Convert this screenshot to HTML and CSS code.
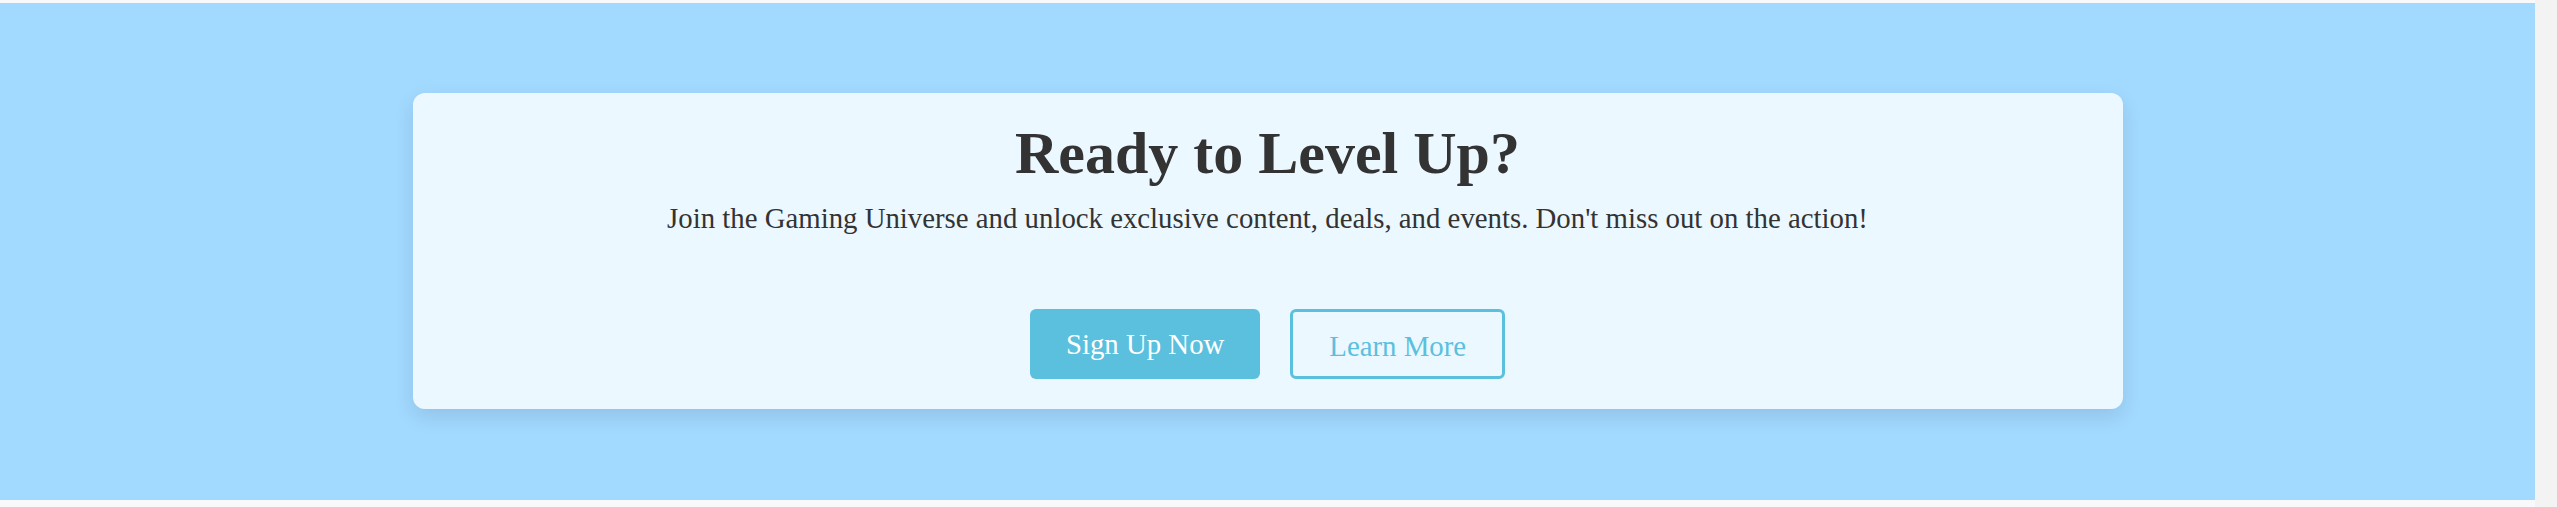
FILE: index.html
```html
<!DOCTYPE html>
<html lang="en">
<head>
<meta charset="utf-8">
<title>Ready to Level Up?</title>
<link rel="stylesheet" href="styles.css">
</head>
<body>
<main class="page">
  <section class="cta">
    <div class="cta-card">
      <h1 class="cta-title">Ready to Level Up?</h1>
      <p class="cta-text">Join the Gaming Universe and unlock exclusive content, deals, and events. Don't miss out on the action!</p>
      <div class="cta-actions">
        <a class="btn btn-primary" href="#">Sign Up Now</a>
        <a class="btn btn-outline" href="#">Learn More</a>
      </div>
    </div>
  </section>
</main>
</body>
</html>
```
FILE: styles.css
```css
html, body {
  margin: 0;
  padding: 0;
}
body {
  background: #f3f3f3;
  font-family: "Liberation Serif", "Times New Roman", serif;
  color: #333;
  min-height: 3060px;
}
.page {
  width: calc(100% - 22px);
  padding-top: 3px;
  background: #f8f9fa;
  min-height: 3060px;
}
.cta {
  background: #a2d9ff;
  padding: 90px 0 91px;
}
.cta-card {
  width: 1710px;
  margin: 0 auto;
  box-sizing: border-box;
  padding: 27px 30px 30px;
  background: rgba(255, 255, 255, 0.8);
  border-radius: 12px;
  box-shadow: 0 8px 20px rgba(0, 0, 0, 0.1);
  text-align: center;
}
.cta-title {
  margin: 0 0 16px;
  font-size: 60px;
  line-height: 66px;
  font-weight: 700;
  color: #333;
}
.cta-text {
  margin: 0;
  font-size: 28.8px;
  line-height: 32px;
  color: #333;
}
.cta-actions {
  display: flex;
  justify-content: center;
  gap: 30px;
  margin-top: 75px;
}
.btn {
  display: inline-block;
  font-size: 28.8px;
  line-height: 34px;
  text-decoration: none;
  border-radius: 6px;
  box-sizing: border-box;
  height: 70px;
}
.btn-primary {
  background: #5bc0de;
  color: #fff;
  padding: 18px 36px;
}
.btn-outline {
  color: #5bc0de;
  border: 3px solid #5bc0de;
  padding: 17px 36px 13px;
}
```
